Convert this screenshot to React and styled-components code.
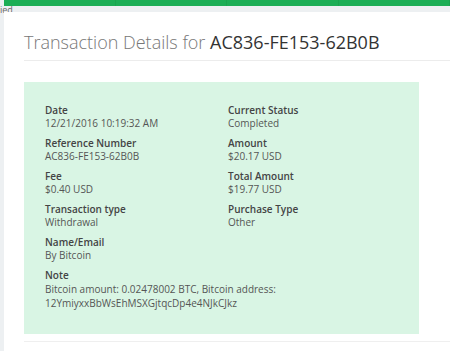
import React from 'react';
import styled, { createGlobalStyle } from "styled-components"

const GlobalStyle = createGlobalStyle`
  html, body {
    margin: 0;
    padding: 0;
    background: #edf0f2;
    font-family: "Open Sans", sans-serif;
  }
`
const Page = styled.div`
  width: 450px;
  height: 351px;
  overflow: hidden;
  display: flex;
  flex-direction: column;
`
const TopBar = styled.div`
  height: 6px;
  margin-left: 4px;
  background: #1cae55;
  display: flex;
`
const TopBarCell = styled.div`
  flex: 1;
  border-right: 1px solid #1aa44f;
`
const StatusStrip = styled.div`
  height: 6px;
  font-size: 9px;
  line-height: 7px;
  color: #666;
  white-space: nowrap;
`
const Card = styled.div`
  flex: 1;
  margin-left: 4px;
  background: #fff;
  padding: 18px 0 0 20px;
`
const Title = styled.h1`
  margin: 0;
  padding-bottom: 6px;
  border-bottom: 1px solid #ececec;
  font-size: 18px;
  line-height: 24px;
  font-weight: 300;
  color: #777;
`
const TitleId = styled.span`
  font-weight: 400;
  color: #333;
`
const DetailsBox = styled.div`
  margin-top: 21px;
  width: 395px;
  box-sizing: border-box;
  background: #d9f5e4;
  padding: 22px 20px 24px 21px;
  display: grid;
  grid-template-columns: 183px 1fr;
  row-gap: 7px;
`
const Field = styled.div`
  grid-column: ${p => p.$wide ? "1 / -1" : "auto"};
`
const Label = styled.div`
  font-size: 10px;
  line-height: 13px;
  font-weight: 600;
  color: #444;
`
const Value = styled.div`
  font-size: 10px;
  line-height: ${p => p.$multiline ? "14px" : "13px"};
  color: #555;
`
const BottomRule = styled.div`
  margin-top: 7px;
  border-top: 1px solid #efefef;
`

const fields = [
  ["Date", "12/21/2016 10:19:32 AM"],
  ["Current Status", "Completed"],
  ["Reference Number", "AC836-FE153-62B0B"],
  ["Amount", "$20.17 USD"],
  ["Fee", "$0.40 USD"],
  ["Total Amount", "$19.77 USD"],
  ["Transaction type", "Withdrawal"],
  ["Purchase Type", "Other"],
]

const App = () => {
  return (
    <Page>
      <GlobalStyle />
      <TopBar>
        <TopBarCell />
        <TopBarCell />
        <TopBarCell />
        <TopBarCell />
      </TopBar>
      <StatusStrip>ied</StatusStrip>
      <Card>
        <Title>Transaction Details for <TitleId>AC836-FE153-62B0B</TitleId></Title>
        <DetailsBox>
          {fields.map(([label, value]) => (
            <Field key={label}>
              <Label>{label}</Label>
              <Value>{value}</Value>
            </Field>
          ))}
          <Field $wide>
            <Label>Name/Email</Label>
            <Value>By Bitcoin</Value>
          </Field>
          <Field $wide>
            <Label>Note</Label>
            <Value $multiline>Bitcoin amount: 0.02478002 BTC, Bitcoin address: 12YmiyxxBbWsEhMSXGjtqcDp4e4NJkCJkz</Value>
          </Field>
        </DetailsBox>
        <BottomRule />
      </Card>
    </Page>
  );
};

export default App;
